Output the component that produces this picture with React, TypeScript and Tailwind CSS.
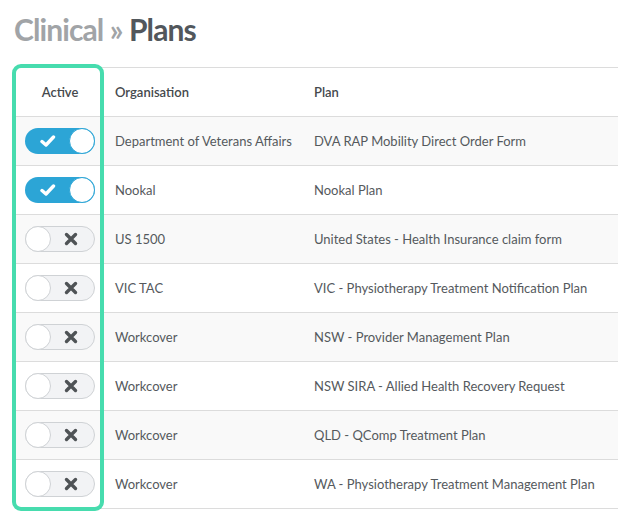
import React from "react";

const rows: { active: boolean; org: string; plan: string }[] = [
  { active: true, org: "Department of Veterans Affairs", plan: "DVA RAP Mobility Direct Order Form" },
  { active: true, org: "Nookal", plan: "Nookal Plan" },
  { active: false, org: "US 1500", plan: "United States - Health Insurance claim form" },
  { active: false, org: "VIC TAC", plan: "VIC - Physiotherapy Treatment Notification Plan" },
  { active: false, org: "Workcover", plan: "NSW - Provider Management Plan" },
  { active: false, org: "Workcover", plan: "NSW SIRA - Allied Health Recovery Request" },
  { active: false, org: "Workcover", plan: "QLD - QComp Treatment Plan" },
  { active: false, org: "Workcover", plan: "WA - Physiotherapy Treatment Management Plan" },
];

function Toggle({ on }: { on: boolean }) {
  if (on) {
    return (
      <div className="relative w-[70px] h-[26px] rounded-full bg-[#2ca5d6] flex items-center">
        <svg className="absolute left-[15px] top-[6px]" width="16" height="14" viewBox="0 0 16 14">
          <path d="M2 7.5 L6 11 L13.5 3" fill="none" stroke="#fff" strokeWidth="3.4" strokeLinecap="round" strokeLinejoin="round" />
        </svg>
        <div className="absolute right-0 top-0 w-[26px] h-[26px] rounded-full bg-white border border-[#2ca5d6]" />
      </div>
    );
  }
  return (
    <div className="relative w-[70px] h-[26px] rounded-full bg-[#f2f3f5] border border-[#cfd2d5]">
      <div className="absolute left-[-1px] top-[-1px] w-[26px] h-[26px] rounded-full bg-white border border-[#cfd2d5]" />
      <svg className="absolute left-[38px] top-[5px]" width="14" height="14" viewBox="0 0 14 14">
        <path d="M2.5 2.5 L11.5 11.5 M11.5 2.5 L2.5 11.5" fill="none" stroke="#4f5356" strokeWidth="3.4" strokeLinecap="round" />
      </svg>
    </div>
  );
}

export default function App() {
  return (
    <div className="relative w-[618px] h-[521px] overflow-hidden bg-white" style={{ fontFamily: "Lato, 'Open Sans', sans-serif" }}>
      <div className="pl-[14px] pt-[11px] h-[67px]">
        <h1 className="text-[30px] font-bold leading-[36px] tracking-[-0.9px]">
          <span className="text-[#a1a4a7]">Clinical</span>
          <span className="text-[#a1a4a7]"> » </span>
          <span className="text-[#52575c]">Plans</span>
        </h1>
      </div>
      <div className="ml-[16px] w-[640px] border-t border-[#dcdcdc] text-[13px]">
        <div className="grid grid-cols-[84px_199px_1fr] h-[49px] border-b border-[#dcdcdc] items-center font-semibold text-[#45494d] pt-[1px]">
          <div className="text-center pl-[4px]">Active</div>
          <div className="pl-[15px]">Organisation</div>
          <div className="pl-[15px]">Plan</div>
        </div>
        {rows.map((r, i) => (
          <div
            key={i}
            className={`grid grid-cols-[84px_199px_1fr] h-[49px] border-b border-[#dcdcdc] items-center text-[#55595d] ${i % 2 === 0 ? "bg-[#f9f9f9]" : "bg-white"}`}
          >
            <div className="pl-[9px]">
              <Toggle on={r.active} />
            </div>
            <div className="pl-[15px] pt-[2px] whitespace-nowrap">{r.org}</div>
            <div className="pl-[15px] pt-[2px] whitespace-nowrap">{r.plan}</div>
          </div>
        ))}
      </div>
      <div className="absolute left-[12px] top-[64px] w-[92px] h-[447px] border-4 border-[#47dcae] rounded-[9px] pointer-events-none" />
    </div>
  );
}
